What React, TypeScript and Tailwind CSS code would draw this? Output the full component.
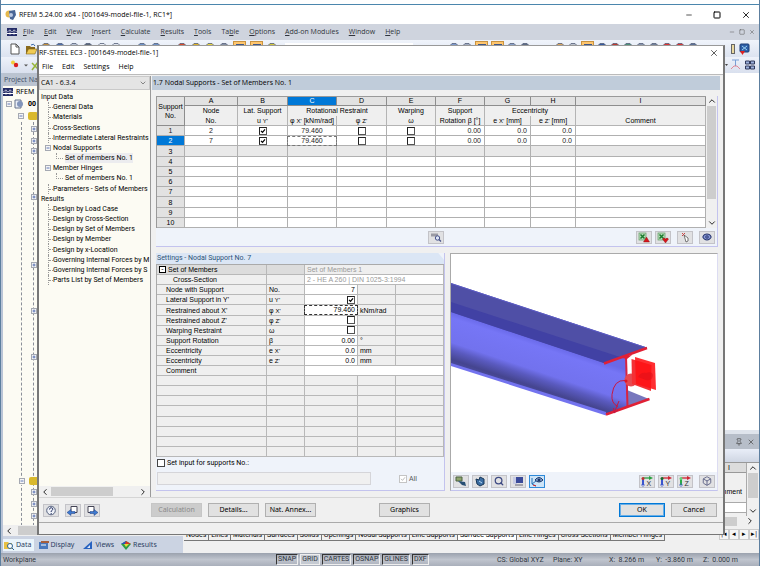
import React, { useState } from 'react';
import { ChevronDown, ChevronLeft, ChevronRight, ChevronUp, Minus, Square, X, Search, Eye, Box, Pin } from 'lucide-react';
import clsx from 'clsx';

const menus = ['File', 'Edit', 'View', 'Insert', 'Calculate', 'Results', 'Tools', 'Table', 'Options', 'Add-on Modules', 'Window', 'Help'];
const accessKeys = [0, 0, 0, 0, 0, 0, 0, 2, 0, 0, 0, 0];

const tree = [
  { text: 'Input Data', level: 0 },
  { text: 'General Data', level: 1 },
  { text: 'Materials', level: 1 },
  { text: 'Cross-Sections', level: 1 },
  { text: 'Intermediate Lateral Restraints', level: 1 },
  { text: 'Nodal Supports', level: 1, open: true },
  { text: 'Set of members No. 1', level: 2 },
  { text: 'Member Hinges', level: 1, open: true },
  { text: 'Set of members No. 1', level: 2 },
  { text: 'Parameters - Sets of Members', level: 1 },
  { text: 'Results', level: 0 },
  { text: 'Design by Load Case', level: 1 },
  { text: 'Design by Cross-Section', level: 1 },
  { text: 'Design by Set of Members', level: 1 },
  { text: 'Design by Member', level: 1 },
  { text: 'Design by x-Location', level: 1 },
  { text: 'Governing Internal Forces by M', level: 1 },
  { text: 'Governing Internal Forces by S', level: 1 },
  { text: 'Parts List by Set of Members', level: 1 },
];

const sheetTabs = ['Nodes', 'Lines', 'Materials', 'Surfaces', 'Solids', 'Openings', 'Nodal Supports', 'Line Supports', 'Surface Supports', 'Line Hinges', 'Cross-Sections', 'Member Hinges'];

const Symbol = ({ base, sub }: { base: string; sub?: string }) => (
  <>
    {base} {sub && <span className="text-[6px] leading-none">{sub}'</span>}
  </>
);

const Tick = ({ label, checked = false, disabled = false, bold = true }: { label: string; checked?: boolean; disabled?: boolean; bold?: boolean }) => {
  const [on, setOn] = useState(checked);
  return (
    <span className="relative inline-flex h-2 w-2 shrink-0 align-middle">
      <input
        type="checkbox"
        aria-label={label}
        checked={on}
        disabled={disabled}
        onChange={() => setOn(!on)}
        className={clsx('h-2 w-2 appearance-none border bg-white', disabled ? 'border-[#c4c4c4]' : bold ? 'border-[#222] border-r-[#555] border-b-[#555]' : 'border-[#444]')}
      />
      {on && (
        <svg viewBox="0 0 8 8" className={clsx('pointer-events-none absolute inset-0 h-2 w-2', disabled ? 'text-[#aaa]' : 'text-black')}>
          <path d="M2 3.800l1.500 1.600L6 2.300" fill="none" stroke="currentColor" strokeWidth={disabled ? 0.8 : 1.2} />
        </svg>
      )}
    </span>
  );
};

const IconButton = ({ label, active, children }: { label: string; active?: boolean; children: React.ReactNode }) => (
  <button
    aria-label={label}
    className={clsx('flex h-[13px] w-4 items-center justify-center border', active ? 'border-[#2f8ad8] bg-[#cde4f7]' : 'border-[#c3c3c8] bg-[#e1e1e3]')}
  >
    {children}
  </button>
);

const PushButton = ({ children, className }: { children: React.ReactNode; className?: string }) => (
  <button className={clsx("h-[14px] border text-center font-['Noto_Sans',sans-serif]", className || 'w-[51px] border-[#b0b0b0] bg-[#e1e1e1]')}>{children}</button>
);

const ExcelIcon = ({ up }: { up?: boolean }) => (
  <svg viewBox="0 0 12 11" className="h-[11px] w-3">
    <rect x="1" y="1" width="7" height="7" fill="#b9dcbb" stroke="#5f9b63" strokeWidth=".7" />
    <path d="M2.500 2.500l4 4M6.500 2.500l-4 4" stroke="#1b7a2c" strokeWidth="1.500" />
    <path d={up ? 'M5.500 10L8.500 5l3 5z' : 'M5.500 7q1.500-2 3 0 1.500-2 3 0l-3 4z'} fill="#d9141c" stroke="#7d1111" strokeWidth=".4" />
  </svg>
);

const AxisIcon = ({ axis }: { axis: string }) => (
  <svg viewBox="0 0 14 11" className="h-[11px] w-[14px]">
    <path d="M3 3v6" stroke={axis === 'Z' ? '#29ad46' : '#3a55cf'} strokeWidth="2" />
    <path d="M3 2h7" stroke={axis === 'X' ? '#29a040' : '#d02434'} strokeWidth="1.300" />
    <path d="M9 0l4 2-4 2z" fill={axis === 'X' ? '#29a040' : '#d02434'} />
    <circle cx="3" cy="2.500" r="1.500" fill={axis === 'X' ? '#b33' : axis === 'Y' ? '#176c2a' : '#68d07a'} />
    <circle cx="3" cy="9" r="1.300" fill="none" stroke="#3a55cf" strokeWidth=".6" />
    <text x="6.500" y="10" fontSize="7" fill="#333" fontFamily="Liberation Sans, sans-serif">{axis}</text>
  </svg>
);

const Expander = ({ plus }: { plus?: boolean }) => (
  <svg viewBox="0 0 6 6" className="h-1.5 w-1.5 shrink-0">
    <rect x=".5" y=".5" width="5" height="5" fill="#f5f5f5" stroke="#a5a9b2" />
    <path d={plus ? 'M1.500 3h3M3 1.500v3' : 'M1.500 3h3'} stroke="#3c5aa8" strokeWidth=".8" />
  </svg>
);

const BridgeIcon = () => (
  <svg viewBox="0 0 10 8" className="h-2 w-2.5 shrink-0">
    <rect width="10" height="8" fill="#232b66" />
    <path d="M0 5.500h10" stroke="#fff" strokeWidth="1" />
    <path d="M3 1.500v5.500M7 1.500v5.500M0 4l3-2 2 2 2-2 3 2" stroke="#fff" strokeWidth=".5" fill="none" />
  </svg>
);

const toolIcons = ['#c28e3c', '#4d6fae', '#b9c3d6', '#596679', '#e8ebf2', '#dde2ec', '', '#6f93c9', '#6f93c9', '', '#d84a2c', '#e0b327', '#e8d53c', '#8590a5', 'hot', 'hot', '#d4c83c'];
const toolIconsRight = ['#7c99cf', '#a0abc0', 'hot', 'hot', '#8aa0c8', '#5d6b84', '', '', '#d9a45c', '#b9bfca', 'hot', '#3559a0', '#c03a30', '#4b9078', '#8592aa', '#71809b', '#d33', '#d33', '#5b6f96'];

const ToolGlyph = ({ color }: { color: string }) => {
  if (color === '') return <span className="h-3 w-2" />;
  if (color === 'hot')
    return (
      <span className="flex h-[15px] w-[13px] items-center justify-center border border-[#c99340] bg-[#ffc66e]">
        <span className="h-2.5 w-2 bg-[#3d5688]" />
      </span>
    );
  return (
    <svg viewBox="0 0 10 12" className="h-3 w-2.5 shrink-0">
      <path d="M1.500 2l1.500-1.500h4l1.500 1.500v9h-7z" fill={color} stroke="#56617a" strokeWidth=".8" />
    </svg>
  );
};

const AppToolbars = () => (
  <>
    <div className="flex h-[17px] shrink-0 items-center bg-linear-to-b from-[#f0f4fb] to-[#dce3f0] pl-2">
      <div className="flex items-center gap-1">
        <svg viewBox="0 0 10 12" className="h-3 w-3">
          <path d="M1 1h5l3 3v7H1z" fill="#fff" stroke="#555" />
          <path d="M6 1v3h3" fill="none" stroke="#555" />
        </svg>
        <svg viewBox="0 0 12 12" className="h-3 w-3">
          <path d="M1 3h4l1 1h4v7H1z" fill="#8a6a1c" />
          <path d="M1 11l2.500-5H12l-2 5z" fill="#f1cb52" stroke="#82641d" strokeWidth=".6" />
          <path d="M6 2q3-2 4 1" stroke="#3666a8" fill="none" />
        </svg>
        {toolIcons.map((c, i) => (
          <ToolGlyph key={i} color={c} />
        ))}
      </div>
      <span className="ml-2 h-3 w-[128px] bg-white" />
      <div className="ml-9 flex items-center gap-[3px]">
        {toolIconsRight.map((c, i) => (
          <ToolGlyph key={i} color={c} />
        ))}
      </div>
      <div className="ml-auto flex items-center gap-1 pr-2">
        <span className="h-2.5 w-1 border border-[#666] bg-[#ead99f]" />
        <svg viewBox="0 0 12 12" className="h-3 w-3">
          <rect x="1" y="1" width="9" height="8" rx="1" fill="#2f60a8" stroke="#1c3c74" />
          <path d="M3 3l5 4M8 3L3 7" stroke="#9ad0f0" />
          <path d="M1 8h5l-2.500 4z" fill="#e02020" />
        </svg>
      </div>
    </div>
    <div className="flex h-[16px] shrink-0 items-center bg-linear-to-b from-[#eef2fa] to-[#d9e0ee] pr-1 pl-2">
      <svg viewBox="0 0 30 12" className="h-3 w-[30px]">
        <circle cx="4" cy="3.500" r="2" fill="#f1cf3b" />
        <circle cx="7" cy="6" r="2.200" fill="#d92020" />
        <path d="M15 5.500h4l-2 2z" fill="#555" />
        <path d="M23 11l6-8M23 4l6 6" stroke="#97b53a" strokeWidth="1.500" />
      </svg>
      <svg viewBox="0 0 30 12" className="ml-auto h-3 w-[30px]">
        <path d="M0 5h3l-1.500 2z" fill="#444" />
        <path d="M7 1h7M10.500 1v6" stroke="#7a9fd6" />
        <path d="M6 10l3-3h3l3 3" fill="none" stroke="#e07080" strokeWidth=".8" />
        <path d="M20.500 2h4v3h-4zM25.500 2h4v3h-4zM20.500 7h4v3h-4zM25.500 7h4v3h-4z" fill="#9db1dc" stroke="#303a5c" />
      </svg>
    </div>
  </>
);

const NavigatorTabs = () => (
  <div className="flex h-[17px] items-center gap-1 bg-[#cbd3e2] font-['Noto_Sans',sans-serif] text-[#2b3f63]">
    <button className="flex h-3 items-center gap-px bg-[#eaf4fb] pr-0.5">
      <svg viewBox="0 0 12 10" className="h-2.5 w-3"><path d="M1 2h4l1 1h3v6H1z" fill="#e8c044" /><circle cx="7" cy="6" r="2.500" fill="#fff" stroke="#2b6394" /><path d="M9 8l2 2" stroke="#2b6394" /></svg>Data
    </button>
    <button className="flex items-center gap-px">
      <svg viewBox="0 0 12 10" className="h-2.5 w-3"><path d="M1 2h9v7H1z" fill="#4a78bc" /><path d="M3 1h8v2H3z" fill="#a85f3b" /><path d="M3 5h5" stroke="#fff" /></svg>Display
    </button>
    <button className="ml-1 flex items-center gap-px">
      <svg viewBox="0 0 12 10" className="h-2.5 w-3"><path d="M1 9h9V1z" fill="#2963c0" /><path d="M5 8h3V5z" fill="#dfe8f7" /></svg>Views
    </button>
    <button className="ml-0.5 flex items-center gap-px">
      <svg viewBox="0 0 12 10" className="h-2.5 w-3"><path d="M1 4l5-3 5 3-5 6z" fill="#2d9c45" /><path d="M1 4l5-3v3z" fill="#2c50c0" /><path d="M6 1l5 3H5z" fill="#d43722" /><path d="M4 4h5L6 7z" fill="#e8d93a" /></svg>Results
    </button>
  </div>
);

const ProjectNavigator = () => (
  <div className="flex w-[182px] shrink-0 flex-col border-l-2 border-[#b9c4d6] bg-[#fcfbf3]">
    <div className="h-[13px] bg-[#bac3d0] pl-px font-['Noto_Sans',sans-serif] leading-[13px] text-[#46536b]">Project Na</div>
    <div className="flex-1 overflow-hidden">
      <div className="flex h-3 items-center gap-[3px] font-['Noto_Sans',sans-serif]"><BridgeIcon />RFEM</div>
      <div className="flex h-3 items-center gap-0.5 pl-[3px] font-['Noto_Sans',sans-serif]">
        <Expander />
        <svg viewBox="0 0 10 10" className="h-2.5 w-2.5"><path d="M1 1h6v8H1z" fill="#e8edf6" stroke="#66728b" /><circle cx="6" cy="5" r="3" fill="#8295bb" /></svg>
        <b className="ml-0.5">00</b>
      </div>
      <div className="flex h-3 items-center pl-[15px]"><Expander /><span className="ml-1 h-2 w-2.5 rounded-xs bg-[#d9b92d]" /></div>
      <div className="ml-[18px] h-full border-l border-dashed border-[#8a8f99]">
        <div className="ml-[11px] flex h-full flex-col border-l border-dashed border-[#8a8f99]">
          <div className="-ml-[3px] flex flex-col pt-1">
            <Expander plus />
            <div className="pt-1.5"><Expander plus /></div>
            <div className="pt-1"><Expander plus /></div>
            <div className="pt-10"><Expander plus /></div>
            <div className="pt-[62px]"><Expander plus /></div>
            <div className="pt-10"><Expander plus /></div>
            <div className="pt-10"><Expander plus /></div>
          </div>
          <div className="-ml-[15px] mt-[117px] flex items-center bg-[#fcfbf3]"><Expander /><span className="ml-1 h-2 w-2.5 rounded-xs bg-[#d9b92d]" /></div>
          <div className="-ml-[3px] flex flex-col gap-1.5 pt-1">
            <Expander plus />
            <Expander plus />
            <Expander plus />
          </div>
        </div>
      </div>
    </div>
    <div className="flex h-[11px] items-center bg-[#efefef] pl-px">
      <ChevronLeft className="h-2.5 w-2.5" />
      <span className="ml-1 h-[9px] flex-1 bg-[#cdcdcd]" />
    </div>
    <NavigatorTabs />
  </div>
);

const RightDock = () => (
  <div className="flex min-w-0 flex-1 flex-col">
    <div className="flex-1 bg-white" />
    <div className="h-1 bg-[#dfe4ec]" />
    <div className="flex h-[15px] items-center justify-end gap-1 bg-[#b7bec9] pr-1 text-[#444]">
      <Pin className="h-2 w-2" />
      <X className="h-2 w-2" />
    </div>
    <div className="h-[14px] border-b border-[#999] bg-linear-to-b from-[#e9eef8] to-[#cfd6e3]" />
    <div className="flex h-[53px] justify-end bg-[#f0f0f0]">
      <div className="w-[60px] border-r border-[#aaa] text-right text-black">
        <div className="h-2.5 border-b border-[#999] bg-[#dcdcdc] pr-4">I</div>
        <div className="h-[30px] border-b border-[#aaa] pt-3.5 pr-1 font-['Liberation_Sans',sans-serif]">Comment</div>
        <div className="h-[10px] border-b border-[#aaa] bg-white" />
      </div>
      <div className="flex w-3 flex-col items-center justify-between">
        <ChevronUp className="h-2.5 w-2.5" />
        <span className="w-2.5 flex-1 bg-[#cdcdcd]" />
        <ChevronDown className="mt-2 h-2.5 w-2.5" />
      </div>
    </div>
    <div className="flex h-2.5 items-center justify-end bg-[#f0f0f0]">
      <span className="mr-2 h-[9px] flex-1 bg-[#cdcdcd]" />
      <ChevronRight className="mr-1 h-2.5 w-2.5" />
    </div>
    <div className="flex h-[15px] items-end bg-[#f0f0f0] text-black">
      <div className="flex pl-px leading-[10px] whitespace-nowrap">
        {sheetTabs.map((t) => (
          <button key={t} className={clsx('border-r border-b border-[#777] px-[2px]', t === 'Surface Supports' && 'bg-white')}>
            {t}
          </button>
        ))}
      </div>
      <div className="mb-px ml-auto flex">
        {['|◂', '◂', '▸', '▸|'].map((g) => (
          <button key={g} aria-label={g} className="h-[11px] w-2.5 border border-[#ccc] bg-[#f6f6f6] leading-[9px]">{g}</button>
        ))}
      </div>
    </div>
    <div className="h-3 bg-[#f0f0f0]" />
  </div>
);

const StatusBar = () => (
  <div className="flex h-[13px] shrink-0 items-center bg-linear-to-b from-[#9ba2ae] via-[#c0c5ce] to-[#a9afbb] pl-0.5 text-[#2f3540]">
    <span className="w-[273px]">Workplane</span>
    <div className="flex gap-[2px]">
      {['SNAP', 'GRID', 'CARTES', 'OSNAP', 'GLINES', 'DXF'].map((s) => (
        <button key={s} className={clsx('h-[11px] border px-px leading-[9px]', s === 'GRID' ? 'border-[#eee] bg-[#c5cad2]' : 'border-t-[#333] border-r-[#eee] border-b-[#eee] border-l-[#333]')}>{s}</button>
      ))}
    </div>
    <div className="ml-auto flex pr-1">
      <span className="w-14">CS: Global XYZ</span>
      <span className="w-14">Plane: XY</span>
      <span className="w-[47px]">X: &nbsp;8.266 m</span>
      <span className="w-[47px]">Y: &nbsp;-3.860 m</span>
      <span className="w-[52px]">Z: &nbsp;0.000 m</span>
    </div>
  </div>
);

const ModuleTree = () => {
  const [selected, setSelected] = useState(6);
  return (
    <div className="flex w-[112px] shrink-0 flex-col border-r border-[#9a9a9a]">
      <div className="relative h-[14px] border border-[#c9c9c9] bg-[#e4e4e4] font-['Open_Sans',sans-serif]">
        <select aria-label="Design case" className="h-full w-full appearance-none pl-px leading-3 outline-none">
          <option>CA1 - 6.3.4</option>
        </select>
        <ChevronDown className="pointer-events-none absolute top-0.5 right-0.5 h-2 w-2 text-[#555]" />
      </div>
      <div className="flex-1 overflow-hidden bg-[#fcfbf3] pt-0.5">
        <div className="grid h-[193px] auto-rows-fr">
          {tree.map((n, i) => (
            <button key={i} onClick={() => setSelected(i)} className={clsx('flex items-center whitespace-nowrap text-left', n.level === 0 ? 'pl-0.5' : n.level === 1 ? 'pl-1' : 'pl-[17px]')}>
              {n.level === 1 && (
                <span className="flex h-full w-2.5 items-center justify-center">
                  {n.open ? <Expander /> : <span className="ml-[5px] h-full w-[5px] border-l border-dotted border-[#999]"><span className="mt-[5px] block border-t border-dotted border-[#999]" /></span>}
                </span>
              )}
              {n.level === 2 && <span className="mr-0.5 mb-1 h-1.5 w-[7px] border-b border-l border-dotted border-[#999]" />}
              <span className={clsx(selected === i && 'bg-[#ececef]')}>{n.text}</span>
            </button>
          ))}
        </div>
      </div>
      <div className="flex h-[11px] items-center bg-[#f0f0f0]">
        <ChevronLeft className="h-2.5 w-3" />
        <span className="h-[9px] w-[62px] bg-[#cdcdcd]" />
        <ChevronRight className="mr-px ml-auto h-2.5 w-3" />
      </div>
    </div>
  );
};

const cols = ['w-[53px]', 'w-[50px]', 'w-[49px]', 'w-[50px]', 'w-[49px]', 'w-[49px]', 'w-[46px]', 'w-[45px]'];
const head = 'border-r border-[#b4b4b4] bg-[#efefef] font-normal p-0';

const SupportsTable = () => {
  const rows = [
    { no: 1, node: 2 },
    { no: 2, node: 7 },
  ];
  return (
    <table className="h-[132px] w-full flex-1 table-fixed border-separate border-spacing-0 border-t border-l border-[#9a9a9a] font-['Liberation_Sans',sans-serif]">
      <colgroup>
        <col className="w-7" />
        {cols.map((c, i) => (
          <col key={i} className={c} />
        ))}
        <col />
      </colgroup>
      <thead>
        <tr className="h-[9px] leading-[8px]">
          <th rowSpan={3} className="border-r border-b border-[#8d8d8d] bg-[#e2e2e2] p-0 leading-[9px] font-normal">Support<br />No.</th>
          {'ABCDEFGHI'.split('').map((l) => (
            <th key={l} className={clsx('border-r border-b border-[#8d8d8d] p-0 font-normal', l === 'C' ? 'bg-[#0078d7] text-white' : 'bg-[#e2e2e2]')}>{l}</th>
          ))}
        </tr>
        <tr className="h-[10px] leading-[10px]">
          <th className={head}>Node</th>
          <th className={head}>Lat. Support</th>
          <th colSpan={2} className={head}>Rotational Restraint</th>
          <th className={head}>Warping</th>
          <th className={head}>Support</th>
          <th colSpan={2} className={head}>Eccentricity</th>
          <th className={head} />
        </tr>
        <tr className="h-[10px] leading-[9px]">
          {['No.', <Symbol base="u" sub="Y" />, <><Symbol base="φ" sub="X" /> [kNm/rad]</>, <Symbol base="φ" sub="Z" />, 'ω', 'Rotation β [°]', <><Symbol base="e" sub="X" /> [mm]</>, <><Symbol base="e" sub="Z" /> [mm]</>, 'Comment'].map((h, i) => (
            <th key={i} className={clsx(head, 'border-b whitespace-nowrap')}>{h}</th>
          ))}
        </tr>
      </thead>
      <tbody className="leading-[9px]">
        {rows.map((r) => (
          <tr key={r.no} className="bg-white text-center text-[#222] *:border-r *:border-b *:border-[#b0b0b0] *:p-0">
            <th className={clsx('font-normal', r.no === 2 ? 'bg-[#0078d7] text-white' : 'bg-[#e2e2e2]')}>{r.no}</th>
            <td>{r.node}</td>
            <td className="leading-[0]"><Tick label={`Lateral support ${r.no}`} checked /></td>
            <td><div className={clsx('leading-[8px]', r.no === 2 && 'outline outline-dashed outline-[#777]')}>79.460</div></td>
            <td className="leading-[0]"><Tick label={`Restraint Z ${r.no}`} /></td>
            <td className="leading-[0]"><Tick label={`Warping ${r.no}`} /></td>
            <td className="text-right"><span className="pr-[3px]">0.00</span></td>
            <td className="text-right"><span className="pr-[3px]">0.0</span></td>
            <td className="text-right"><span className="pr-[3px]">0.0</span></td>
            <td />
          </tr>
        ))}
        {[3, 4, 5, 6, 7, 8, 9, 10].map((n) => (
          <tr key={n} className={clsx('text-center *:border-r *:border-b *:border-[#b0b0b0] *:p-0', n === 3 ? 'bg-[#e9e9e9]' : 'bg-white')}>
            <th className="bg-[#e2e2e2] font-normal">{n}</th>
            {[0, 1, 2, 3, 4, 5, 6, 7, 8].map((c) => (
              <td key={c} />
            ))}
          </tr>
        ))}
      </tbody>
    </table>
  );
};

const settings: { name: string; symbol: React.ReactNode; value: React.ReactNode; unit?: string; focus?: boolean }[] = [
  { name: 'Node with Support', symbol: 'No.', value: '7' },
  { name: "Lateral Support in Y'", symbol: <Symbol base="u" sub="Y" />, value: <Tick label="Lateral Support in Y'" checked /> },
  { name: "Restrained about X'", symbol: <Symbol base="φ" sub="X" />, value: '79.460', unit: 'kNm/rad', focus: true },
  { name: "Restrained about Z'", symbol: <Symbol base="φ" sub="Z" />, value: <Tick label="Restrained about Z'" /> },
  { name: 'Warping Restraint', symbol: 'ω', value: <Tick label="Warping Restraint" /> },
  { name: 'Support Rotation', symbol: 'β', value: '0.00', unit: '°' },
  { name: 'Eccentricity', symbol: <Symbol base="e" sub="X" />, value: '0.0', unit: 'mm' },
  { name: 'Eccentricity', symbol: <Symbol base="e" sub="Z" />, value: '0.0', unit: 'mm' },
];

const SettingsPanel = () => (
  <div className="flex w-[289px] shrink-0 flex-col border-r border-b border-[#c3c3ee] bg-[#eff3fa]">
    <div className="h-[11px] bg-[#dbe6f5] pl-px text-[#2c5378] [clip-path:polygon(0_0,98%_0,100%_60%,100%_100%,0_100%)]">Settings - Nodal Support No. 7</div>
    <table className="h-[193px] w-full table-fixed border-separate border-spacing-0 border-t border-l border-[#aaa] bg-[#efefef] font-['Liberation_Sans',sans-serif] leading-[9px]">
      <colgroup>
        <col className="w-[110px]" />
        <col className="w-[38px]" />
        <col className="w-[53px]" />
        <col className="w-[38px]" />
        <col />
      </colgroup>
      <tbody className="[&_td]:border-r [&_td]:border-b [&_td]:border-[#b8b8b8] [&_td]:p-0 [&_tr]:h-[10px]">
        <tr className="bg-[#dcdcdc]">
          <td>
            <div className="flex items-center gap-0.5 pl-0.5">
              <span className="h-[7px] w-[7px] border border-black bg-white text-center leading-[4px]">-</span>Set of Members
            </div>
          </td>
          <td />
          <td colSpan={3} className="bg-[#efefef] text-[#9a9a9a]"><span className="pl-0.5">Set of Members 1</span></td>
        </tr>
        <tr>
          <td><span className="pl-4">Cross-Section</span></td>
          <td />
          <td colSpan={3} className="bg-white text-[#9a9a9a]"><span className="pl-0.5">2 - HE A 260 | DIN 1025-3:1994</span></td>
        </tr>
        {settings.map((s, i) => (
          <tr key={i}>
            <td><span className="pl-[9px]">{s.name}</span></td>
            <td><div className="h-[9px] overflow-hidden pl-0.5">{s.symbol}</div></td>
            <td className={clsx('bg-white text-right', typeof s.value !== 'string' && 'leading-[0]')}>
              <div className={clsx('pr-0.5', s.focus && 'leading-[8px] outline outline-dashed outline-[#333]')}>{s.value}</div>
            </td>
            <td className="whitespace-nowrap"><span className="pl-0.5">{s.unit}</span></td>
            <td />
          </tr>
        ))}
        <tr>
          <td><span className="pl-[9px]">Comment</span></td>
          <td />
          <td colSpan={3} className="bg-white" />
        </tr>
        {[0, 1, 2, 3, 4, 5, 6, 7].map((r) => (
          <tr key={r}>
            {[0, 1, 2, 3, 4].map((c) => (
              <td key={c} />
            ))}
          </tr>
        ))}
      </tbody>
    </table>
    <div className="flex flex-1 flex-col justify-center gap-1 pb-1 pl-px">
      <div className="flex items-center gap-0.5">
        <Tick label="Set input for supports No." bold={false} />
        <span>Set input for supports No.:</span>
      </div>
      <div className="flex items-center">
        <input aria-label="Supports" disabled className="h-[13px] w-[214px] border border-[#d5d5d9] bg-[#f0f0f0]" />
        <label className="ml-7 flex items-center gap-0.5 text-[#555]"><Tick label="All" checked disabled />All</label>
      </div>
    </div>
  </div>
);

const BeamView = () => (
  <svg viewBox="0 0 266 218" preserveAspectRatio="xMinYMin slice" className="h-full w-full">
    <defs>
      <linearGradient id="web" gradientUnits="userSpaceOnUse" x1="80" y1="84" x2="64" y2="132">
        <stop offset="0" stopColor="#6969e8" />
        <stop offset=".12" stopColor="#7676f6" />
        <stop offset=".58" stopColor="#7272ee" />
        <stop offset=".72" stopColor="#5a5abf" />
        <stop offset=".9" stopColor="#45458f" />
        <stop offset="1" stopColor="#4c4c9f" />
      </linearGradient>
    </defs>
    <path d="M0 57L153 108l22-6 3 50-22 8L0 110z" fill="url(#web)" />
    <path d="M0 109L155 158v3.500L0 112z" fill="#7373ef" />
    <path d="M176 136l22 9-21 7z" fill="#7777bd" />
    <path d="M0 29l196 64.500-43 15.500L0 58z" fill="#4f4fa6" />
    <path d="M0 48l169 55-16 6L0 58z" fill="#4141a4" />
    <path d="M0 29.500l196 64.500" stroke="#5c5cc6" strokeWidth="1" />
    <path d="M153 109.500L196 94" stroke="#e02035" strokeWidth="2.400" />
    <path d="M155 160.500L198.500 145" stroke="#e02035" strokeWidth="2.400" />
    <path d="M175 102l1.500 51" stroke="#d82440" strokeWidth="2" />
    <path d="M171 104l4-2 6-1-5 4zM172 154l5-3 4 1z" fill="#e02035" />
    <circle cx="180" cy="126" r="6.500" fill="#e64950" />
    <path d="M180.500 105l20 6-.5 26-19-7z" fill="#f43034" />
    <path d="M184 103l20 6 1 27-20-6z" fill="#ff1115" fillOpacity=".88" />
    <path d="M187 123q3-5 8-4 6-2 7 2 0 6-7 5z" fill="#db1018" fillOpacity=".5" />
    <path d="M174 126.500q-11-1-13 14-1 9 6 12M168 147l-5 12M162.500 154l.5 5 4-3" fill="none" stroke="#c81742" strokeWidth="1" />
    <circle cx="175" cy="127" r="1.500" fill="#e01525" />
  </svg>
);

const ViewPanel = () => (
  <div className="flex flex-1 flex-col border border-t-[#aaa] border-r-[#dcdcf2] border-b-[#c3c3ee] border-l-[#aaa] bg-white">
    <div className="h-[218px] flex-1"><BeamView /></div>
    <div className="flex h-[18px] items-center gap-[3px] bg-[#eff3fa] px-0.5">
      <IconButton label="Render">
        <svg viewBox="0 0 12 11" className="h-[11px] w-3"><path d="M1 1h6v4H1z" fill="#8fa46d" stroke="#4b6342" /><path d="M3 5l7 1 1 4-4-1z" fill="#284f75" /></svg>
      </IconButton>
      <IconButton label="Rotate">
        <svg viewBox="0 0 12 11" className="h-[11px] w-3"><path d="M2 3l3 1 1-3 4 2v5L6 10 3 8z" fill="#3b6da3" stroke="#173657" /><path d="M5 5l3 2" stroke="#b7d8f4" /></svg>
      </IconButton>
      <IconButton label="Zoom"><Search className="h-2.5 w-2.5 text-[#3d4a83]" strokeWidth={3} /></IconButton>
      <IconButton label="Screen">
        <svg viewBox="0 0 12 11" className="h-[11px] w-3"><path d="M1 1h4v7H1z" fill="#c7cbe4" /><path d="M4 1h7v6H4z" fill="#3a4a9a" /><path d="M3 9h8" stroke="#667" /></svg>
      </IconButton>
      <IconButton label="Axes" active>
        <svg viewBox="0 0 14 11" className="h-[11px] w-[14px]"><path d="M2 2v6l4 2M2 8l4-3" stroke="#2272b8" fill="none" /><path d="M5 4q4-5 8 0-4 4-8 0z" fill="#8ba8d8" stroke="#1b3766" /><circle cx="9" cy="4" r="1.500" fill="#1b3766" /><path d="M3 9l3 1" stroke="#d22" /></svg>
      </IconButton>
      <div className="ml-auto flex gap-[3px]">
        <IconButton label="View X"><AxisIcon axis="X" /></IconButton>
        <IconButton label="View Y"><AxisIcon axis="Y" /></IconButton>
        <IconButton label="View Z"><AxisIcon axis="Z" /></IconButton>
      </div>
      <div className="ml-[3px]"><IconButton label="Isometric"><Box className="h-2.5 w-2.5 text-[#52587e]" /></IconButton></div>
    </div>
  </div>
);

const ModuleDialog = () => (
  <div role="dialog" aria-label="RF-STEEL EC3" className="absolute top-[45px] right-[34px] bottom-[31px] left-9 flex flex-col border-t border-r-2 border-b border-l-2 border-[#777] border-t-[#999] bg-[#f0f0f0] text-black">
    <div className="flex h-[15px] items-center justify-between bg-white pr-1 font-['Open_Sans',sans-serif]">
      <span>RF-STEEL EC3 - [001649-model-file-1]</span>
      <button aria-label="Close dialog"><X className="h-2.5 w-2.5" strokeWidth={1.5} /></button>
    </div>
    <div className="flex h-[15px] items-center gap-[9px] border-b border-[#bbb] bg-white pl-[3px] font-['Open_Sans',sans-serif]">
      {['File', 'Edit', 'Settings', 'Help'].map((m) => (
        <button key={m}>{m}</button>
      ))}
    </div>
    <div className="flex flex-1 pt-px">
      <ModuleTree />
      <div className="flex flex-1 flex-col pr-[3px] pl-px">
        <div className="h-[14px] bg-[#c0ccda] pl-px font-['Open_Sans',sans-serif] leading-[14px]">1.7 Nodal Supports - Set of Members No. 1</div>
        <div className="mt-1.5 mr-0.5 ml-1 border-r border-b border-[#c3c3ee] bg-[#eff3fa]">
          <div className="flex">
            <SupportsTable />
            <div className="flex w-[11px] flex-col items-center bg-[#f0f0f0]">
              <ChevronUp className="h-2.5 w-2.5" />
              <span className="h-[93px] w-[9px] bg-[#cdcdcd]" />
              <ChevronDown className="mt-auto h-2.5 w-2.5" />
            </div>
          </div>
          <div className="flex h-[18px] items-center pr-0.5">
            <div className="ml-[272px]">
              <IconButton label="Find">
                <svg viewBox="0 0 12 11" className="h-[11px] w-3"><path d="M1 1.500h7v3H1z" fill="#9a9aa4" /><circle cx="7.500" cy="6" r="2.200" fill="#dce4f6" stroke="#46528a" /><path d="M9 7.500l2 2" stroke="#46528a" strokeWidth="1.300" /></svg>
              </IconButton>
            </div>
            <div className="ml-auto flex gap-[3px]">
              <IconButton label="Excel export"><ExcelIcon up /></IconButton>
              <IconButton label="Excel import"><ExcelIcon /></IconButton>
            </div>
            <div className="ml-1.5">
              <IconButton label="Pick">
                <svg viewBox="0 0 12 11" className="h-[11px] w-3"><path d="M3 1l3 3M6 1L3 4" stroke="#c44" /><path d="M5 3l4 3v3l-2 1z" fill="#fff" stroke="#555" strokeWidth=".8" /></svg>
              </IconButton>
            </div>
            <div className="ml-1.5"><IconButton label="Show"><Eye className="h-2.5 w-2.5 fill-[#8d9ddc] text-[#28376f]" strokeWidth={2.5} /></IconButton></div>
          </div>
        </div>
        <div className="mt-1.5 mr-0.5 mb-1.5 ml-1 flex flex-1 gap-[5px]">
          <SettingsPanel />
          <ViewPanel />
        </div>
      </div>
    </div>
    <div className="flex h-[26px] items-center border-t border-[#d5d5d5] pr-1 pl-1">
      <div className="flex gap-[3px]">
        <IconButton label="Help">
          <svg viewBox="0 0 12 11" className="h-[11px] w-3"><circle cx="6" cy="5.500" r="4.300" fill="#eef1f8" stroke="#55617e" /><path d="M4.500 4.500q0-1.800 1.700-1.800t1.600 1.500q0 1-1.600 1.800v1" stroke="#2e3a6a" fill="none" /><path d="M5.700 8h1v1h-1z" fill="#2e3a6a" /></svg>
        </IconButton>
        <div className="ml-[3px] flex gap-[3px]">
          <IconButton label="Previous table">
            <svg viewBox="0 0 12 11" className="h-[11px] w-3"><path d="M4 1.500h6v6H4z" fill="#fff" stroke="#445" /><path d="M0 7.500l4-3v2h4v2H4v2z" fill="#3e7ad0" stroke="#1c3d80" strokeWidth=".5" /></svg>
          </IconButton>
          <IconButton label="Next table">
            <svg viewBox="0 0 12 11" className="h-[11px] w-3"><path d="M2 1.500h6v6H2z" fill="#fff" stroke="#445" /><path d="M12 7.500l-4-3v2H4v2h4v2z" fill="#3e7ad0" stroke="#1c3d80" strokeWidth=".5" /></svg>
          </IconButton>
        </div>
      </div>
      <div className="ml-[51px] flex gap-1.5">
        <PushButton className="w-[51px] border-[#c6c6c6] bg-[#cccccc] text-[#8a8a8a]">Calculation</PushButton>
        <PushButton>Details...</PushButton>
        <PushButton>Nat. Annex...</PushButton>
      </div>
      <div className="ml-[63px]"><PushButton>Graphics</PushButton></div>
      <div className="ml-auto flex gap-1.5 pr-0.5">
        <PushButton className="w-[46px] border-[#0078d7] bg-[#e1e1e1] ring-1 ring-[#69aee6] ring-inset">OK</PushButton>
        <PushButton className="w-[46px] border-[#b0b0b0] bg-[#e1e1e1]">Cancel</PushButton>
      </div>
    </div>
    <div className="h-3 border-t border-[#aaa]" />
  </div>
);

const App = () => (
  <div className="h-screen overflow-hidden bg-white pb-1 font-['Roboto',sans-serif] text-[7px] leading-[10px] text-black">
    <div className="relative flex h-full flex-col overflow-hidden border-r border-l border-[#5d7f9f]">
      <div className="h-[5px] shrink-0 border-b border-[#4b86ad] bg-white" />
      <div className="flex h-[19px] shrink-0 items-center bg-white pr-2 pl-1 font-['Open_Sans',sans-serif]">
        <svg viewBox="0 0 12 12" className="mr-0.5 h-3 w-3"><circle cx="4" cy="5" r="3.500" fill="#e5b94d" /><path d="M4 2l6-1 1 5-3 5-3-1z" fill="#496596" /><circle cx="6" cy="6" r="2" fill="#bcc9e3" /></svg>
        <span>RFEM 5.24.00 x64 - [001649-model-file-1, RC1*]</span>
        <div className="ml-auto flex items-center gap-5">
          <button aria-label="Minimize"><Minus className="h-2 w-2" /></button>
          <button aria-label="Maximize"><Square className="h-2 w-2" strokeWidth={3} /></button>
          <button aria-label="Close"><X className="h-2.5 w-2.5" /></button>
        </div>
      </div>
      <div className="flex h-4 shrink-0 items-center gap-2.5 bg-[#cfd4de] pl-1.5 font-['Open_Sans',sans-serif] text-[#30343c]">
        <div className="-mr-1"><BridgeIcon /></div>
        {menus.map((m, i) => (
          <button key={m} className="whitespace-nowrap">{m.slice(0, accessKeys[i])}<u>{m[accessKeys[i]]}</u>{m.slice(accessKeys[i] + 1)}</button>
        ))}
        <div className="ml-auto flex gap-1 pr-1 text-[#555]">
          <Minus className="h-1.5 w-1.5" /><Square className="h-1.5 w-1.5" /><X className="h-1.5 w-1.5" />
        </div>
      </div>
      <AppToolbars />
      <div className="flex min-h-0 flex-1">
        <ProjectNavigator />
        <RightDock />
      </div>
      <StatusBar />
      <ModuleDialog />
    </div>
  </div>
);

export default App;
